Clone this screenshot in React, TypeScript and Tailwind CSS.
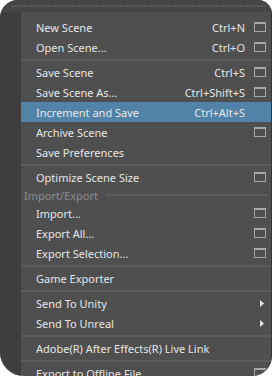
import React from "react";

type Item =
  | { kind: "item"; label: string; shortcut?: string; box?: boolean; arrow?: boolean; active?: boolean }
  | { kind: "sep" }
  | { kind: "header"; label: string };

const items: Item[] = [
  { kind: "item", label: "New Scene", shortcut: "Ctrl+N", box: true },
  { kind: "item", label: "Open Scene...", shortcut: "Ctrl+O", box: true },
  { kind: "sep" },
  { kind: "item", label: "Save Scene", shortcut: "Ctrl+S", box: true },
  { kind: "item", label: "Save Scene As...", shortcut: "Ctrl+Shift+S", box: true },
  { kind: "item", label: "Increment and Save", shortcut: "Ctrl+Alt+S", active: true },
  { kind: "item", label: "Archive Scene", box: true },
  { kind: "item", label: "Save Preferences" },
  { kind: "sep" },
  { kind: "item", label: "Optimize Scene Size", box: true },
  { kind: "header", label: "Import/Export" },
  { kind: "item", label: "Import...", box: true },
  { kind: "item", label: "Export All...", box: true },
  { kind: "item", label: "Export Selection...", box: true },
  { kind: "sep" },
  { kind: "item", label: "Game Exporter" },
  { kind: "sep" },
  { kind: "item", label: "Send To Unity", arrow: true },
  { kind: "item", label: "Send To Unreal", arrow: true },
  { kind: "sep" },
  { kind: "item", label: "Adobe(R) After Effects(R) Live Link" },
  { kind: "sep" },
  { kind: "item", label: "Export to Offline File...", box: true },
];

function OptionBox() {
  return (
    <div className="w-[12px] h-[10px] border border-[#a8a8a8] border-t-[2px] box-border" />
  );
}

function Arrow() {
  return (
    <svg width="5" height="7" viewBox="0 0 5 7" className="ml-[6px]">
      <path d="M0 0 L4 3.5 L0 7 Z" fill="#e8e8e8" />
    </svg>
  );
}

export default function App() {
  return (
    <div className="w-[272px] h-[376px] bg-white overflow-hidden">
      <div
        className="w-full h-full bg-[#4f4f4f] rounded-tl-[18px] rounded-tr-[14px] rounded-bl-[24px] rounded-br-[20px] overflow-hidden flex flex-col border-r border-[#333333]"
        style={{ fontFamily: '"Noto Sans", "DejaVu Sans", sans-serif' }}
      >
        <div className="h-[12px] bg-[#454545] flex items-start pt-[5px] pl-[12px] pr-[6px] shrink-0">
          <div
            className="h-[2px] w-full"
            style={{
              backgroundImage:
                "repeating-linear-gradient(to right, #5c5c5c 0px, #5c5c5c 2px, transparent 2px, transparent 3px)",
            }}
          />
        </div>
        <div className="flex flex-1">
          <div className="w-[21px] bg-[#3e3e3e] shrink-0" />
          <div className="flex-1 flex flex-col pt-[5px]">
            {items.map((it, i) => {
              if (it.kind === "sep") {
                return (
                  <div key={i} className="h-[5px] flex items-center">
                    <div className="h-[2px] w-full bg-[#5c5c5c]" />
                  </div>
                );
              }
              if (it.kind === "header") {
                return (
                  <div key={i} className="h-[16px] flex items-center pl-[3px] pr-[4px] gap-[8px]">
                    <span className="text-[11px] text-[#8c8c8c] leading-none whitespace-nowrap">{it.label}</span>
                    <div className="h-[2px] flex-1 bg-[#5c5c5c]" />
                  </div>
                );
              }
              return (
                <div
                  key={i}
                  className={`h-[20px] flex items-center shrink-0 ${it.active ? "bg-[#5083a7]" : ""}`}
                >
                  <span className="flex-1 pl-[15px] text-[11px] text-[#e6e6e6] leading-none whitespace-nowrap">
                    {it.label}
                  </span>
                  {it.shortcut && (
                    <span className="text-[11px] text-[#e6e6e6] leading-none whitespace-nowrap">{it.shortcut}</span>
                  )}
                  <div className="w-[26px] pl-[9px] flex items-center shrink-0">
                    {it.box && <OptionBox />}
                    {it.arrow && <Arrow />}
                  </div>
                </div>
              );
            })}
          </div>
        </div>
      </div>
    </div>
  );
}
